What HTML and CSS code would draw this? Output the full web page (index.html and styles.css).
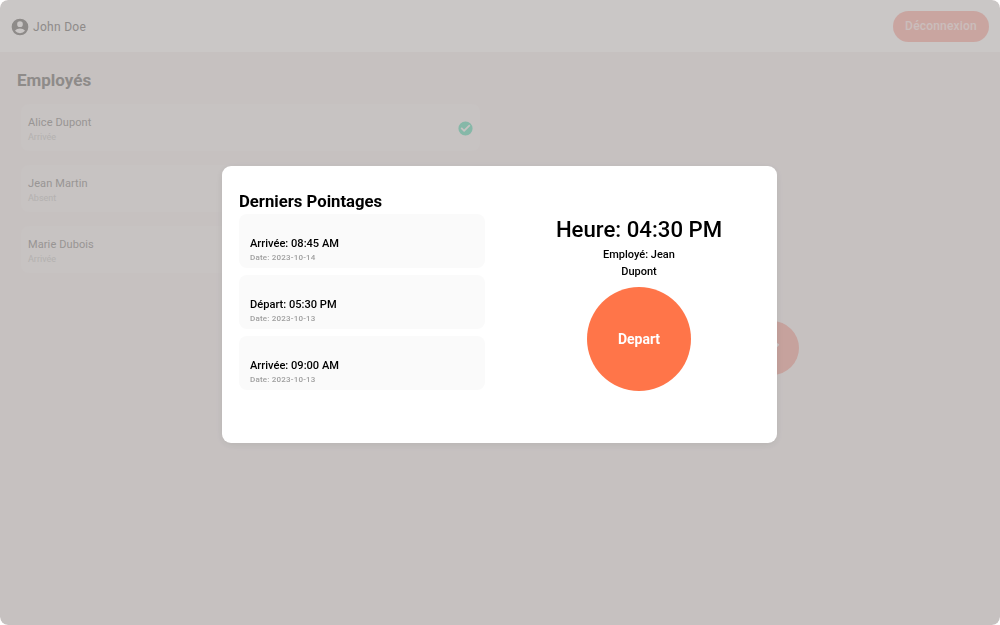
FILE: index.html
```html
<!doctype html>
<html>
	<head>
		<title>Pointage</title>
		<link rel="stylesheet" href="styles.css">
	</head>
	<body>
	<div class="screen">

		<div class="header">
			<div class="user">
				<svg class="user-icon" viewBox="0 0 24 24"><path d="M12 2a10 10 0 1 0 0 20 10 10 0 0 0 0-20zm0 3.2a3.4 3.4 0 1 1 0 6.8 3.4 3.4 0 0 1 0-6.8zm0 14.3a7.6 7.6 0 0 1-6-3c1.3-1.7 4-2.6 6-2.6s4.7.9 6 2.6a7.6 7.6 0 0 1-6 3z"/></svg>
				<span>John Doe</span>
			</div>
			<div class="logout">Déconnexion</div>
		</div>

		<div class="content">
			<h1>Employés</h1>
			<div class="employee">
				<div>
					<div class="employee-name">Alice Dupont</div>
					<div class="employee-status">Arrivée</div>
				</div>
				<svg class="check" viewBox="0 0 24 24"><path d="M12 2a10 10 0 1 0 0 20 10 10 0 0 0 0-20zm-2 15-5-5 1.8-1.8 3.2 3.2 7.2-7.2L19 8z"/></svg>
			</div>
			<div class="employee">
				<div>
					<div class="employee-name">Jean Martin</div>
					<div class="employee-status">Absent</div>
				</div>
			</div>
			<div class="employee">
				<div>
					<div class="employee-name">Marie Dubois</div>
					<div class="employee-status">Arrivée</div>
				</div>
			</div>
		</div>

		<div class="fab">
			<svg class="fab-icon" viewBox="0 0 24 24"><path d="M5 12.5 10 17.5 19 7.5"/></svg>
		</div>

		<div class="overlay">
			<div class="modal">
				<div class="history">
					<h2>Derniers Pointages</h2>
					<div class="punch">
						<div class="punch-time">Arrivée: 08:45 AM</div>
						<div class="punch-date">Date: 2023-10-14</div>
					</div>
					<div class="punch">
						<div class="punch-time">Départ: 05:30 PM</div>
						<div class="punch-date">Date: 2023-10-13</div>
					</div>
					<div class="punch">
						<div class="punch-time">Arrivée: 09:00 AM</div>
						<div class="punch-date">Date: 2023-10-13</div>
					</div>
				</div>
				<div class="clock">
					<div class="clock-time">Heure: 04:30 PM</div>
					<div class="clock-employee">Employé: Jean Dupont</div>
					<div class="clock-button">Depart</div>
				</div>
			</div>
		</div>

	</div>
	</body>
</html>
```

FILE: styles.css
```css
* {
	margin: 0;
	padding: 0;
	box-sizing: border-box;
}

body,
html {
	height: 100%;
}

body {
	background: #fff;
	font-family: Roboto, sans-serif;
	color: #212121;
}

.screen {
	position: relative;
	height: 100%;
	overflow: hidden;
	border-radius: 8px;
	background: #f8f2f1;
}

.header {
	display: flex;
	justify-content: space-between;
	align-items: center;
	height: 52px;
	padding: 0 11px 0 10px;
	background: #fdf9f8;
}

.user {
	display: flex;
	align-items: center;
	gap: 3px;
	padding-top: 1px;
	font-size: 12px;
	letter-spacing: 0.3px;
	color: #b2aeac;
}

.user-icon {
	width: 20px;
	height: 20px;
	fill: #b2aeac;
}

.logout {
	padding: 0 12px;
	height: 31px;
	line-height: 31px;
	border-radius: 16px;
	background: #fa7a6a;
	font-size: 12px;
	font-weight: 500;
	letter-spacing: 0.2px;
	color: rgba(255,255,255,0.7);
	opacity: 0.32;
}

.content {
	padding: 18px 21px;
}

h1 {
	margin: 0 0 14px -4px;
	font-size: 17px;
	line-height: 20px;
	font-weight: 700;
	color: #b2aeac;
}

.employee {
	display: flex;
	justify-content: space-between;
	align-items: center;
	width: 459px;
	height: 47px;
	margin-bottom: 14px;
	padding: 2px 6px 0 7px;
	border-radius: 8px;
	background: #f9f4f3;
}

.employee-name {
	font-size: 11px;
	line-height: 15px;
	letter-spacing: 0.1px;
	color: #bfbbb9;
}

.employee-status {
	margin-top: 2px;
	font-size: 9px;
	line-height: 11px;
	color: #e2dedc;
}

.check {
	width: 17px;
	height: 17px;
	fill: #a8e6d2;
}

.fab {
	position: absolute;
	left: 745px;
	top: 321px;
	display: flex;
	align-items: center;
	justify-content: center;
	width: 54px;
	height: 54px;
	border-radius: 50%;
	background: #fa7a6a;
	opacity: 0.32;
}

.fab-icon {
	width: 22px;
	height: 22px;
	fill: none;
	stroke: #fff;
	stroke-width: 2.5;
}

.overlay {
	position: absolute;
	top: 0;
	left: 0;
	right: 0;
	bottom: 0;
	display: flex;
	align-items: center;
	justify-content: center;
	background: rgba(0,0,0,0.2);
	backdrop-filter: blur(0.6px);
}

.modal {
	display: flex;
	width: 555px;
	height: 277px;
	margin: 0 1px 16px 0;
	padding: 26px 17px 0;
	border-radius: 9px;
	background: #fff;
	box-shadow: 0 2px 8px rgba(0,0,0,0.08);
	color: #000;
}

.history {
	width: 246px;
}

h2 {
	margin-bottom: 3px;
	font-size: 16.7px;
	line-height: 19px;
	font-weight: 700;
}

.punch {
	height: 54px;
	margin-bottom: 7px;
	padding: 23px 11px 0;
	border-radius: 8px;
	background: #fafafa;
}

.punch-time {
	font-size: 11.1px;
	line-height: 14px;
	font-weight: 500;
}

.punch-date {
	margin-top: 2px;
	font-size: 8px;
	line-height: 10px;
	font-weight: 500;
	letter-spacing: 0.2px;
	color: #9e9e9e;
}

.clock {
	flex: 1;
	display: flex;
	flex-direction: column;
	align-items: center;
	padding: 23px 0 0 33px;
}

.clock-time {
	font-size: 22.2px;
	line-height: 28px;
	font-weight: 500;
}

.clock-employee {
	width: 90px;
	margin-top: 3px;
	text-align: center;
	font-size: 11px;
	line-height: 17px;
	font-weight: 500;
}

.clock-button {
	display: flex;
	align-items: center;
	justify-content: center;
	width: 104px;
	height: 104px;
	margin-top: 7px;
	border-radius: 50%;
	background: #ff7549;
	font-size: 14px;
	font-weight: 700;
	color: #fff;
}
```
